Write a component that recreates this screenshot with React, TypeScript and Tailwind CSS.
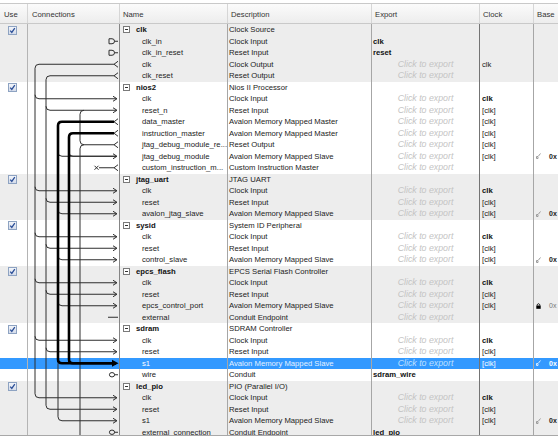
import React from 'react';

type Row = {
  name: string;
  group?: boolean;
  desc: string;
  exp?: string;
  click?: boolean;
  clk?: string;
  clkBold?: boolean;
  base?: 'addr' | 'lock';
  sel?: boolean;
};

const AMMS = 'Avalon Memory Mapped Slave';

const rows: Row[] = [
  { name: 'clk', group: true, desc: 'Clock Source' },
  { name: 'clk_in', desc: 'Clock Input', exp: 'clk' },
  { name: 'clk_in_reset', desc: 'Reset Input', exp: 'reset' },
  { name: 'clk', desc: 'Clock Output', click: true, clk: 'clk' },
  { name: 'clk_reset', desc: 'Reset Output', click: true },
  { name: 'nios2', group: true, desc: 'Nios II Processor' },
  { name: 'clk', desc: 'Clock Input', click: true, clk: 'clk', clkBold: true },
  { name: 'reset_n', desc: 'Reset Input', click: true, clk: '[clk]' },
  { name: 'data_master', desc: 'Avalon Memory Mapped Master', click: true, clk: '[clk]' },
  { name: 'instruction_master', desc: 'Avalon Memory Mapped Master', click: true, clk: '[clk]' },
  { name: 'jtag_debug_module_re...', desc: 'Reset Output', click: true, clk: '[clk]' },
  { name: 'jtag_debug_module', desc: AMMS, click: true, clk: '[clk]', base: 'addr' },
  { name: 'custom_instruction_m...', desc: 'Custom Instruction Master', click: true },
  { name: 'jtag_uart', group: true, desc: 'JTAG UART' },
  { name: 'clk', desc: 'Clock Input', click: true, clk: 'clk', clkBold: true },
  { name: 'reset', desc: 'Reset Input', click: true, clk: '[clk]' },
  { name: 'avalon_jtag_slave', desc: AMMS, click: true, clk: '[clk]', base: 'addr' },
  { name: 'sysid', group: true, desc: 'System ID Peripheral' },
  { name: 'clk', desc: 'Clock Input', click: true, clk: 'clk', clkBold: true },
  { name: 'reset', desc: 'Reset Input', click: true, clk: '[clk]' },
  { name: 'control_slave', desc: AMMS, click: true, clk: '[clk]', base: 'addr' },
  { name: 'epcs_flash', group: true, desc: 'EPCS Serial Flash Controller' },
  { name: 'clk', desc: 'Clock Input', click: true, clk: 'clk', clkBold: true },
  { name: 'reset', desc: 'Reset Input', click: true, clk: '[clk]' },
  { name: 'epcs_control_port', desc: AMMS, click: true, clk: '[clk]', base: 'lock' },
  { name: 'external', desc: 'Conduit Endpoint', click: true },
  { name: 'sdram', group: true, desc: 'SDRAM Controller' },
  { name: 'clk', desc: 'Clock Input', click: true, clk: 'clk', clkBold: true },
  { name: 'reset', desc: 'Reset Input', click: true, clk: '[clk]' },
  { name: 's1', desc: AMMS, click: true, clk: '[clk]', base: 'addr', sel: true },
  { name: 'wire', desc: 'Conduit', exp: 'sdram_wire' },
  { name: 'led_pio', group: true, desc: 'PIO (Parallel I/O)' },
  { name: 'clk', desc: 'Clock Input', click: true, clk: 'clk', clkBold: true },
  { name: 'reset', desc: 'Reset Input', click: true, clk: '[clk]' },
  { name: 's1', desc: AMMS, click: true, clk: '[clk]', base: 'addr' },
  { name: 'external_connection', desc: 'Conduit Endpoint', exp: 'led_pio' },
];

const cols = 'grid grid-cols-[28px_92px_108px_144px_108px_54px_24px]';

const Y = (i: number) => 11.5 * i + 5.75;
const R = 4;
const trunk = (x: number, a: number, b: number) =>
  `M114 ${Y(a)} H${x + R} Q${x} ${Y(a)} ${x} ${Y(a) + R} V${Y(b) - R} Q${x} ${Y(b)} ${x + R} ${Y(b)} H116`;
const branch = (x: number, i: number) => `M${x} ${Y(i) - R} Q${x} ${Y(i)} ${x + R} ${Y(i)} H116`;
const arrowIn = (i: number) => `M113 ${Y(i) - 2.5} L117 ${Y(i)} L113 ${Y(i) + 2.5}`;
const arrowOut = (i: number) => `M118 ${Y(i) - 3} L114 ${Y(i)} L118 ${Y(i) + 3}`;

function Connections() {
  const thin: string[] = [];
  // clock
  thin.push(trunk(35, 3, 32));
  [6, 14, 18, 22, 27].forEach((i) => thin.push(branch(35, i)));
  // reset
  thin.push(trunk(46, 4, 33));
  [7, 15, 19, 23, 28].forEach((i) => thin.push(branch(46, i)));
  // data master thin branches
  [11, 16, 20, 24].forEach((i) => thin.push(branch(58, i)));
  thin.push(`M58 ${Y(29)} V${Y(34) - R} Q58 ${Y(34)} ${58 + R} ${Y(34)} H116`);
  // instruction master thin branch
  thin.push(branch(69, 11));
  // jtag debug reset
  thin.push(`M114 ${Y(10)} H84 Q80 ${Y(10)} 80 ${Y(10) - R} V${Y(7) + R} Q80 ${Y(7)} 84 ${Y(7)}`);
  thin.push(`M84 ${Y(10)} Q80 ${Y(10)} 80 ${Y(10) + R} V414`);
  // custom instruction
  thin.push(`M99 ${Y(12)} H114`);
  // inputs / outputs
  [6, 7, 11, 14, 15, 16, 18, 19, 20, 22, 23, 24, 27, 28, 32, 33, 34].forEach((i) => thin.push(arrowIn(i)));
  [3, 4, 8, 9, 10, 12].forEach((i) => thin.push(arrowOut(i)));
  // exports
  [1, 2].forEach((i) =>
    thin.push(`M109 ${Y(i) - 2.5} H112 Q114.5 ${Y(i) - 2.5} 114.5 ${Y(i)} Q114.5 ${Y(i) + 2.5} 112 ${Y(i) + 2.5} H109 Z M114.5 ${Y(i)} H118`)
  );
  [30, 35].forEach((i) => thin.push(`M114.5 ${Y(i)} H118`));
  thin.push(`M108 ${Y(25)} H118`);

  const thick = [trunk(58, 8, 29), trunk(69, 9, 29)];

  return (
    <svg className="absolute left-0 top-0 pointer-events-none" width={120} height={414}>
      <g fill="none" stroke="#2e2e2e" strokeWidth={1}>
        {thin.map((d, k) => (
          <path key={k} d={d} />
        ))}
        {[30, 35].map((i) => (
          <ellipse key={i} cx={112} cy={Y(i)} rx={2.6} ry={2.2} />
        ))}
        <path d={`M94.5 ${Y(12) - 2} L98.5 ${Y(12) + 2} M94.5 ${Y(12) + 2} L98.5 ${Y(12) - 2}`} />
      </g>
      <g fill="none" stroke="#000" strokeWidth={2.6}>
        {thick.map((d, k) => (
          <path key={k} d={d} />
        ))}
      </g>
      <polygon points={`112,${Y(29) - 3.5} 118.5,${Y(29)} 112,${Y(29) + 3.5}`} fill="#000" />
    </svg>
  );
}

function Check() {
  return (
    <div className="ml-[8px] mt-[1.5px] w-[9px] h-[9px] border border-[#8ea3c2] bg-gradient-to-b from-[#f2f5fa] to-[#d5dcea] flex items-center justify-center">
      <svg width="7" height="7" viewBox="0 0 7 7">
        <path d="M1.2 3.6 L2.8 5.4 L5.8 1.2" fill="none" stroke="#2b4f98" strokeWidth="1.3" />
      </svg>
    </div>
  );
}

function BaseCell({ kind, sel }: { kind?: 'addr' | 'lock'; sel?: boolean }) {
  if (!kind) return null;
  return (
    <div className="flex items-center h-full pl-[2px] whitespace-nowrap">
      {kind === 'addr' ? (
        <svg className="shrink-0" width="5" height="6" viewBox="0 0 5 6">
          <path d="M0.5 5.5 L0.5 3.5 L2 3.5 L2 5.5 Z M2.5 3 L4.5 0.5" fill="none" stroke={sel ? '#d8ebff' : '#9a9a9a'} strokeWidth="1" />
        </svg>
      ) : (
        <svg className="shrink-0" width="5" height="6" viewBox="0 0 5 6">
          <path d="M1.2 2.5 V1.6 Q2.5 -0.2 3.8 1.6 V2.5" fill="none" stroke="#000" strokeWidth="0.9" />
          <rect x="0.3" y="2.5" width="4.4" height="3.3" fill="#000" />
        </svg>
      )}
      <span className={`ml-[8px] text-[7px] ${kind === 'addr' ? 'font-bold' : 'text-[#777]'} ${sel ? 'text-white' : ''}`}>0x</span>
    </div>
  );
}

export default function App() {
  let g = -1;
  return (
    <div className="w-[558px] h-[440px] bg-white overflow-hidden text-[7.7px] text-[#222]" style={{ fontFamily: '"Liberation Sans", Arial, sans-serif' }}>
      <div className="pt-[3px]">
        <div className={`${cols} h-[21px] border-y border-[#c9c9c9] bg-gradient-to-b from-[#fbfbfb] to-[#ededed] text-[#333]`}>
          {['Use', 'Connections', 'Name', 'Description', 'Export', 'Clock', 'Base'].map((h, k) => (
            <div
              key={h}
              className={`flex items-center pt-[3px] whitespace-nowrap overflow-hidden ${k < 6 ? 'border-r border-[#d6d6d6]' : ''} ${
                k < 2 ? 'pl-[4px]' : 'pl-[3px]'
              }`}
            >
              {h}
            </div>
          ))}
        </div>
      </div>
      <div className="relative h-[412px] overflow-hidden border-b border-[#a8a8a8]">
        {rows.map((r, i) => {
          if (r.group) g++;
          const bg = r.sel ? 'bg-[#3399ff]' : g % 2 === 0 ? 'bg-[#ededed]' : 'bg-white';
          return (
            <div key={i} className={`${cols} h-[11.5px] leading-[11.5px] ${bg}`}>
              <div className="border-r border-[#b4b4b4]">{r.group && <Check />}</div>
              <div className="border-r border-[#858585]" />
              <div className="border-r border-[#a6a6a6] whitespace-nowrap overflow-hidden">
                {r.group ? (
                  <div className="flex items-center h-full">
                    <div className="ml-[3px] w-[7px] h-[7px] border border-[#7a7a7a] bg-white flex items-center justify-center">
                      <div className="w-[3px] h-px bg-[#333]" />
                    </div>
                    <span className="ml-[6px] font-bold text-[#111]">{r.name}</span>
                  </div>
                ) : (
                  <span className={`pl-[22px] ${r.sel ? 'text-white' : ''}`}>{r.name}</span>
                )}
              </div>
              <div className={`border-r border-[#a6a6a6] pl-[1px] whitespace-nowrap overflow-hidden ${r.sel ? 'text-[#e4f1ff]' : ''}`}>{r.desc}</div>
              <div className="border-r border-[#747474] whitespace-nowrap overflow-hidden">
                {r.exp && <span className="pl-[1px] font-bold text-[#111]">{r.exp}</span>}
                {r.click && (
                  <div className={`text-center italic text-[8.8px] ${r.sel ? 'text-[#bfe0ff]' : 'text-[#c4c4c4]'}`}>Click to export</div>
                )}
              </div>
              <div className={`border-r border-[#a6a6a6] pl-[2px] whitespace-nowrap ${r.clkBold ? 'font-bold text-[#111]' : ''} ${r.sel ? 'text-white' : ''}`}>
                {r.clk}
              </div>
              <div className="overflow-hidden">
                <BaseCell kind={r.base} sel={r.sel} />
              </div>
            </div>
          );
        })}
        <Connections />
      </div>
    </div>
  );
}
